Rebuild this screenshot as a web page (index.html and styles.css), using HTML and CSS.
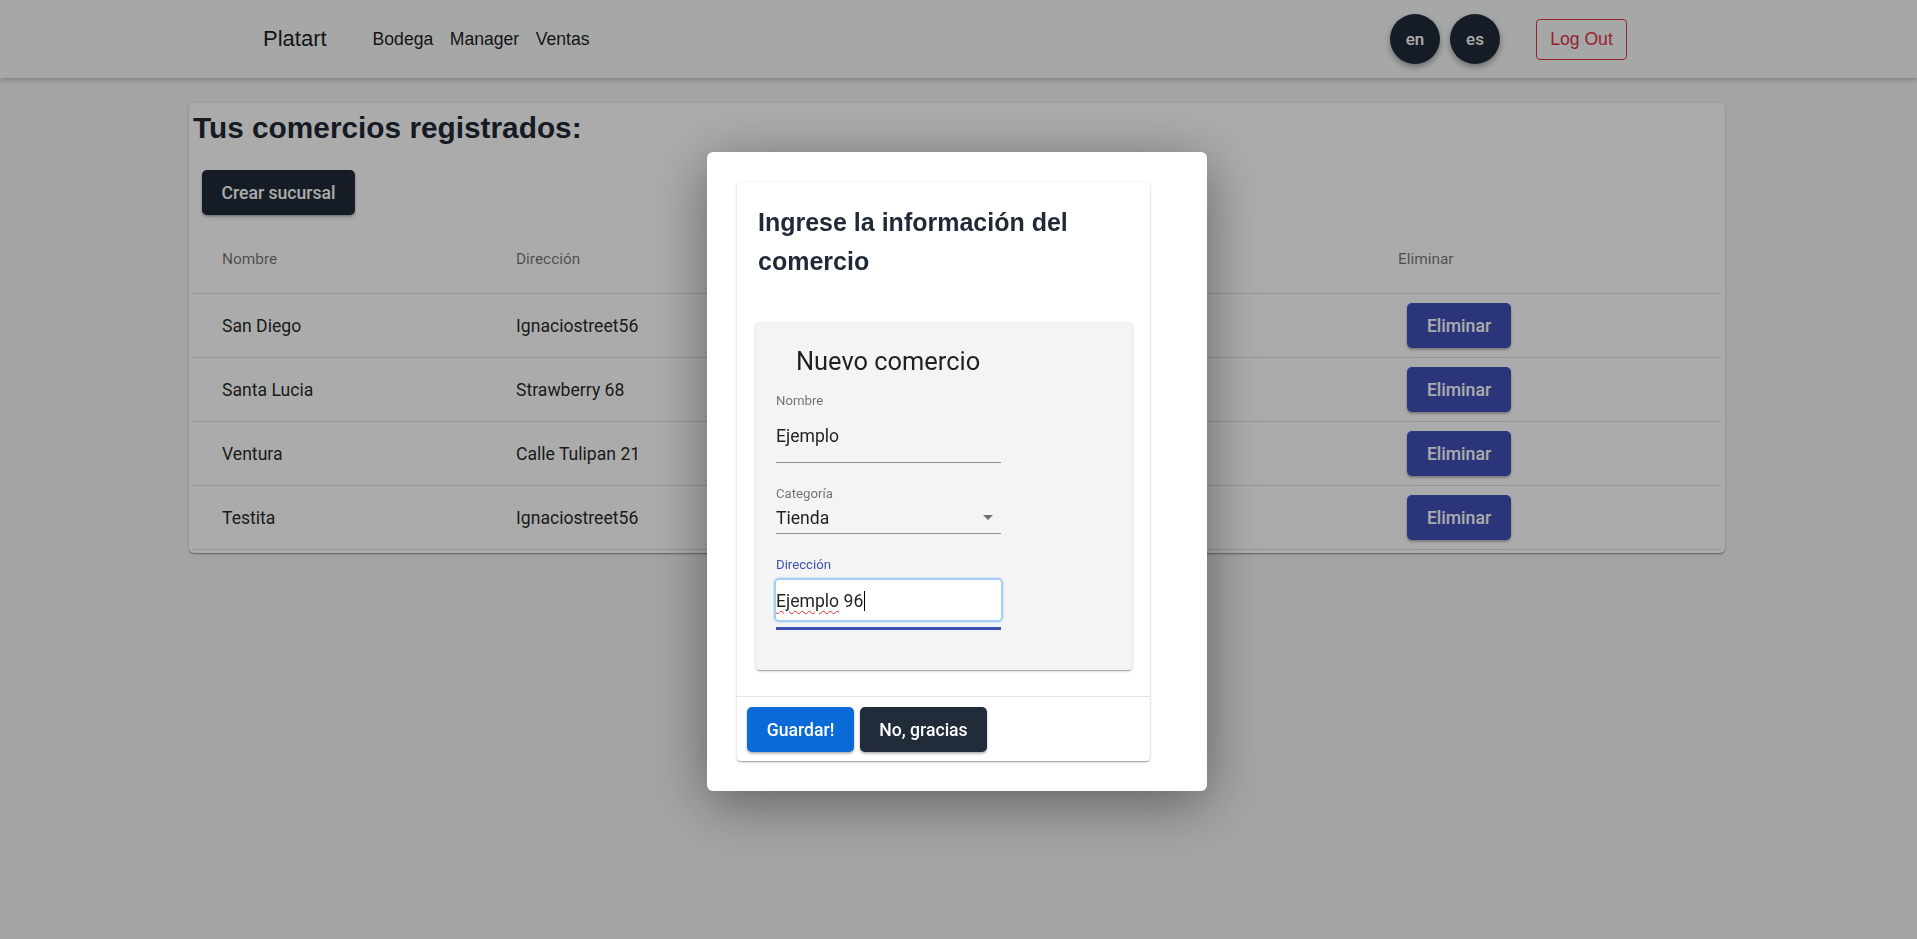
FILE: index.html
```html
<!DOCTYPE html>
<html lang="es">
<head>
<meta charset="utf-8">
<title>Platart</title>
<link rel="stylesheet" href="styles.css">
</head>
<body>
<header class="navbar">
  <a class="brand" href="#">Platart</a>
  <nav class="nav-links">
    <a href="#">Bodega</a>
    <a href="#">Manager</a>
    <a href="#">Ventas</a>
  </nav>
  <div class="nav-right">
    <button class="lang">en</button>
    <button class="lang">es</button>
    <button class="logout">Log Out</button>
  </div>
</header>

<main class="page">
  <section class="card">
    <h3 class="page-title">Tus comercios registrados:</h3>
    <button class="btn btn-dark btn-create">Crear sucursal</button>
    <div class="table">
      <div class="trow thead">
        <div class="cell">Nombre</div>
        <div class="cell">Dirección</div>
        <div class="cell"></div>
        <div class="cell"></div>
        <div class="cell">Eliminar</div>
      </div>
      <div class="trow">
        <div class="cell">San Diego</div>
        <div class="cell">Ignaciostreet56</div>
        <div class="cell"></div>
        <div class="cell"></div>
        <div class="cell"><button class="btn btn-indigo">Eliminar</button></div>
      </div>
      <div class="trow">
        <div class="cell">Santa Lucia</div>
        <div class="cell">Strawberry 68</div>
        <div class="cell"></div>
        <div class="cell"></div>
        <div class="cell"><button class="btn btn-indigo">Eliminar</button></div>
      </div>
      <div class="trow">
        <div class="cell">Ventura</div>
        <div class="cell">Calle Tulipan 21</div>
        <div class="cell"></div>
        <div class="cell"></div>
        <div class="cell"><button class="btn btn-indigo">Eliminar</button></div>
      </div>
      <div class="trow">
        <div class="cell">Testita</div>
        <div class="cell">Ignaciostreet56</div>
        <div class="cell"></div>
        <div class="cell"></div>
        <div class="cell"><button class="btn btn-indigo">Eliminar</button></div>
      </div>
    </div>
  </section>
</main>

<div class="backdrop">
  <div class="modal">
    <div class="modal-card">
      <h2 class="modal-title">Ingrese la información del comercio</h2>
      <div class="modal-body">
        <div class="form-paper">
          <h4 class="form-title">Nuevo comercio</h4>
          <div class="field">
            <label class="field-label">Nombre</label>
            <div class="input-line">Ejemplo</div>
          </div>
          <div class="field field-select">
            <label class="field-label">Categoría</label>
            <div class="select-line">
              <span>Tienda</span>
              <svg class="arrow" width="10" height="5" viewBox="0 0 10 5"><path d="M0 0 L10 0 L5 5 Z" fill="rgba(0,0,0,0.54)"/></svg>
            </div>
          </div>
          <div class="field field-focus">
            <label class="field-label focused">Dirección</label>
            <div class="focus-box"><span class="misspelled">Ejemplo</span>&nbsp;96<span class="caret"></span></div>
            <div class="focus-underline"></div>
          </div>
        </div>
      </div>
      <div class="modal-footer">
        <button class="btn btn-blue">Guardar!</button>
        <button class="btn btn-dark">No, gracias</button>
      </div>
    </div>
  </div>
</div>
</body>
</html>
```

FILE: styles.css
```css
* { box-sizing: border-box; }

html, body {
  margin: 0;
  padding: 0;
}

body {
  background: #f5f5f5;
  font-family: Roboto, "Liberation Sans", Arial, sans-serif;
  color: rgba(0, 0, 0, 0.87);
  height: 939px;
  overflow: hidden;
}

button {
  font-family: inherit;
  cursor: pointer;
}

/* ---------- navbar ---------- */
.navbar {
  display: flex;
  align-items: center;
  height: 78px;
  padding: 0 290px 0 263px;
  background: #f8f9fa;
  box-shadow: 0 2px 5px rgba(0, 0, 0, 0.22);
  font-family: "Liberation Sans", Arial, sans-serif;
}

.brand {
  font-size: 22px;
  color: rgba(0, 0, 0, 0.9);
  text-decoration: none;
  line-height: 1;
}

.nav-links {
  display: flex;
  gap: 16.5px;
  margin-left: 46px;
}

.nav-links a {
  font-size: 17.6px;
  color: rgba(0, 0, 0, 0.9);
  text-decoration: none;
}

.nav-right {
  display: flex;
  align-items: center;
  margin-left: auto;
}

.lang {
  width: 50px;
  height: 50px;
  border-radius: 50%;
  border: none;
  background: #212b39;
  color: #fff;
  font-family: Roboto, sans-serif;
  font-weight: 500;
  font-size: 17px;
  box-shadow: 0 3px 6px rgba(0, 0, 0, 0.35);
  padding: 0;
}

.lang + .lang { margin-left: 10px; }

.logout {
  margin-left: 36px;
  width: 91px;
  height: 41px;
  border: 1px solid #dc3545;
  border-radius: 4px;
  background: transparent;
  color: #dc3545;
  font-family: "Liberation Sans", Arial, sans-serif;
  font-size: 17.6px;
  padding: 0;
}

/* ---------- page card ---------- */
.page {
  padding: 25px 0 0 189px;
}

.card {
  width: 1536px;
  background: #fff;
  border-radius: 5px;
  box-shadow: 0 1px 3px rgba(0, 0, 0, 0.2), 0 1px 1px rgba(0, 0, 0, 0.14), 0 2px 1px -1px rgba(0, 0, 0, 0.12);
  padding: 7px 4px 3px;
}

.page-title {
  margin: 0 0 24px 0;
  font-family: "Liberation Sans", Arial, sans-serif;
  font-weight: 700;
  font-size: 29.8px;
  line-height: 36px;
  color: #1f2937;
}

.btn {
  border: none;
  border-radius: 5px;
  height: 45px;
  padding: 0;
  font-family: Roboto, sans-serif;
  font-weight: 500;
  font-size: 17.6px;
  color: #fff;
  box-shadow: 0 2px 3px rgba(0, 0, 0, 0.22), 0 1px 2px rgba(0, 0, 0, 0.14);
}

.btn-dark { background: #212b39; }

.btn-create {
  width: 153px;
  margin-left: 9px;
}

.table {
  margin-top: 9px;
}

.trow {
  display: grid;
  grid-template-columns: 294px 294px 294px 294px 1fr;
  align-items: center;
  height: 64px;
  border-bottom: 1px solid #e0e0e0;
  font-size: 17.6px;
}

.trow.thead {
  height: 70px;
  font-size: 15.4px;
  font-weight: 400;
  color: rgba(0, 0, 0, 0.56);
}

.cell {
  padding-left: 29px;
  white-space: nowrap;
}

.btn-indigo {
  background: #3f51b5;
  width: 104px;
  margin-left: 9px;
}

/* ---------- modal ---------- */
.backdrop {
  position: fixed;
  inset: 0;
  background: rgba(0, 0, 0, 0.33);
  display: flex;
  justify-content: center;
  align-items: flex-start;
  padding: 152px 3px 0 0;
}

.modal {
  width: 500px;
  background: #fff;
  border-radius: 6px;
  padding: 30px;
  box-shadow: 0 12px 55px rgba(0, 0, 0, 0.42);
}

.modal-card {
  width: 413px;
  background: #fff;
  border-radius: 4px;
  box-shadow: 0 1px 3px rgba(0, 0, 0, 0.2), 0 1px 1px rgba(0, 0, 0, 0.14), 0 2px 1px -1px rgba(0, 0, 0, 0.12);
}

.modal-title {
  margin: 0;
  padding: 21px 21px 0;
  font-family: "Liberation Sans", Arial, sans-serif;
  font-weight: 700;
  font-size: 25px;
  line-height: 39px;
  color: #1f2937;
}

.modal-body {
  padding: 41px 18px 0 19px;
}

.form-paper {
  background: #f4f4f4;
  border-radius: 4px;
  padding: 24px 20px 40px;
  box-shadow: 0 1px 3px rgba(0, 0, 0, 0.2), 0 1px 1px rgba(0, 0, 0, 0.14), 0 2px 1px -1px rgba(0, 0, 0, 0.12);
}

.form-title {
  margin: 0 0 17px 20px;
  font-family: Roboto, sans-serif;
  font-weight: 400;
  font-size: 25.4px;
  line-height: 30px;
  color: rgba(0, 0, 0, 0.87);
}

.field {
  width: 225px;
  display: flex;
  flex-direction: column;
}

.field-label {
  font-size: 13.2px;
  line-height: 16px;
  color: rgba(0, 0, 0, 0.54);
}

.field-label.focused { color: #3f51b5; }

.input-line {
  height: 54px;
  display: flex;
  align-items: center;
  font-size: 17.6px;
  border-bottom: 1px solid rgba(0, 0, 0, 0.42);
}

.field-select { margin-top: 23px; }

.select-line {
  height: 32px;
  display: flex;
  align-items: center;
  justify-content: space-between;
  font-size: 17.6px;
  padding-right: 8px;
  border-bottom: 1px solid rgba(0, 0, 0, 0.42);
}

.field-focus { margin-top: 23px; }

.focus-box {
  margin: 5px -2px 0;
  height: 44px;
  background: #fff;
  border: 2px solid #a9cdf4;
  border-radius: 5px;
  box-shadow: 0 0 0 1px #d3e6fa;
  display: flex;
  align-items: center;
  font-size: 17.6px;
  padding-top: 2px;
}

.misspelled {
  text-decoration: underline wavy #e0302a;
  text-decoration-thickness: 1px;
  text-underline-offset: 3px;
}

.caret {
  display: inline-block;
  width: 1px;
  height: 20px;
  background: #000;
  margin-left: 1px;
}

.focus-underline {
  margin-top: 5px;
  height: 3px;
  background: #3f51b5;
}

.modal-footer {
  margin-top: 26px;
  border-top: 1px solid #e5e5e5;
  padding: 10px 10px 9px;
  display: flex;
  gap: 6px;
}

.btn-blue {
  background: #0a6ad8;
  width: 107px;
}

.modal-footer .btn-dark { width: 127px; }
```
